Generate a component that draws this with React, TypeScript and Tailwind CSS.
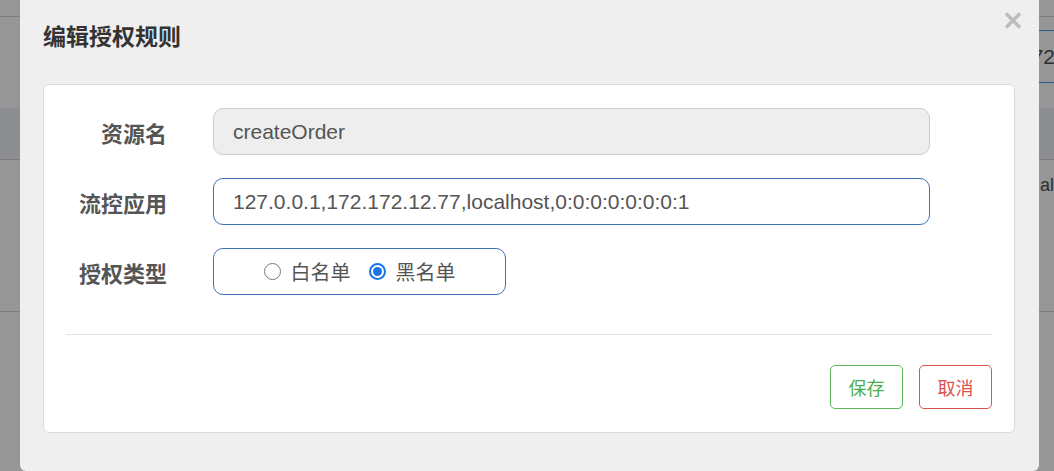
import React from "react";

const cjk = { fontFamily: '"Noto Sans CJK SC", "Noto Sans", sans-serif' };
const latin = { fontFamily: '"Liberation Sans", Arial, "Noto Sans CJK SC", sans-serif' };

function Radio({ checked, label }: { checked: boolean; label: string }) {
  return (
    <span className="flex items-center gap-[10px]">
      {checked ? (
        <span className="w-[17px] h-[17px] rounded-full border-[2px] border-[#1a73e8] flex items-center justify-center">
          <span className="w-[9px] h-[9px] rounded-full bg-[#1a73e8]" />
        </span>
      ) : (
        <span className="w-[17px] h-[17px] rounded-full border-[1.5px] border-[#767676] bg-white" />
      )}
      <span className="text-[20px] text-[#555] leading-none" style={cjk}>
        {label}
      </span>
    </span>
  );
}

export default function App() {
  const rows = [
    { label: "资源名", value: "createOrder", disabled: true },
    { label: "流控应用", value: "127.0.0.1,172.172.12.77,localhost,0:0:0:0:0:0:0:1", disabled: false },
  ];

  return (
    <div className="relative w-[1054px] h-[471px] overflow-hidden bg-[#969696]">
      {/* page under the backdrop */}
      <div className="flex flex-col text-[#333]" style={latin}>
        <div className="h-[17px] border-b border-[#7c7c7c]" />
        <div className="h-[91px] flex justify-end pt-[13px]">
          <div className="w-[200px] h-[53px] -mr-[40px] border-y border-[#2f5b8e] flex items-center pl-[126px] text-[21px] text-[#2e2e2e]">
            172
          </div>
        </div>
        <div className="h-[52px] bg-[#8d8e91] border-b border-[#7c7c7c]" />
        <div className="h-[152px] border-b border-[#7c7c7c] flex justify-end pt-[12px]">
          <span className="text-[18px] -mr-[4px] text-[#2e2e2e]">all</span>
        </div>
      </div>

      {/* modal */}
      <div className="absolute top-0 left-[20px] w-[1019px] h-[471px] bg-[#efefef] rounded-b-[6px] flex flex-col">
        <div className="h-[84px] flex items-start justify-between pl-[23px] pr-[16px]">
          <h4 className="pt-[20px] text-[23px] leading-[30px] font-bold text-[#333]" style={cjk}>
            编辑授权规则
          </h4>
          <svg className="mt-[12px]" width="20" height="17" viewBox="0 0 20 17">
            <path d="M3 1.5 L17 15.5 M17 1.5 L3 15.5" stroke="#bcbcbc" strokeWidth="3.4" strokeLinecap="butt" />
          </svg>
        </div>

        <div className="ml-[23px] mr-[24px] bg-white border border-[#dadada] rounded-[6px] px-[22px] pt-[23px] pb-[23px]">
          <div className="flex flex-col gap-[23px]">
            {rows.map((r) => (
              <div key={r.label} className="flex items-center h-[47px]">
                <label className="w-[101px] text-right text-[22px] font-bold text-[#555] leading-none" style={cjk}>
                  {r.label}
                </label>
                <div
                  className={`ml-[46px] w-[717px] h-[47px] rounded-[10px] border flex items-center pl-[19px] text-[21px] text-[#555] ${
                    r.disabled ? "bg-[#eeeeee] border-[#cccccc]" : "bg-white border-[#3f72b4]"
                  }`}
                  style={latin}
                >
                  {r.value}
                </div>
              </div>
            ))}
            <div className="flex items-center h-[47px]">
              <label className="w-[101px] text-right text-[22px] font-bold text-[#555] leading-none" style={cjk}>
                授权类型
              </label>
              <div className="ml-[46px] w-[293px] h-[47px] rounded-[10px] border border-[#3f72b4] flex items-center justify-center gap-[18px]">
                <Radio checked={false} label="白名单" />
                <Radio checked={true} label="黑名单" />
              </div>
            </div>
          </div>

          <div className="mt-[39px] border-t border-[#e5e5e5]" />

          <div className="mt-[30px] flex justify-end gap-[16px]">
            <button
              className="w-[73px] h-[44px] rounded-[5px] border border-[#5cb85c] bg-white text-[18px] text-[#4cae4c]"
              style={cjk}
            >
              保存
            </button>
            <button
              className="w-[73px] h-[44px] rounded-[5px] border border-[#d9534f] bg-white text-[18px] text-[#d9534f]"
              style={cjk}
            >
              取消
            </button>
          </div>
        </div>
      </div>
    </div>
  );
}
